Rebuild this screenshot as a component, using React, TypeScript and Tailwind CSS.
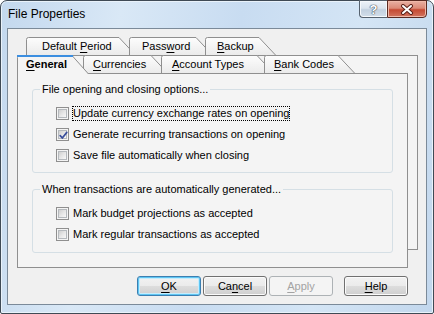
import React from "react";

const font = "font-['Liberation_Sans',Arial,sans-serif]";

function Mnemonic({ text, at }: { text: string; at: number }) {
  return (
    <>
      {text.slice(0, at)}
      <span className="underline decoration-1 underline-offset-[2px]">{text[at]}</span>
      {text.slice(at + 1)}
    </>
  );
}

interface TabProps {
  text: string;
  at: number;
  w: number;
  selected?: boolean;
  className: string;
  textClass: string;
}

function Tab({ text, at, w, selected = false, className, textClass }: TabProps) {
  const h = selected ? 19 : 18;
  const id = `tabfill-${text.replace(/\s/g, "")}`;
  return (
    <div className={`relative shrink-0 ${className}`}>
      <svg className="absolute left-0 top-0" width={w} height={h}>
        <defs>
          <linearGradient id={id} x1="0" y1="0" x2="0" y2="1">
            <stop offset="0" stopColor="#fdfdfd" />
            <stop offset="1" stopColor="#ebebeb" />
          </linearGradient>
        </defs>
        <path
          d={`M0.5 ${h} V2.5 Q0.5 0.5 2.5 0.5 H${w - 17} L${w - 0.5} ${h}`}
          fill={selected ? "#f4f4f4" : `url(#${id})`}
          stroke="#8f8f8f"
        />
        {selected && <rect x="0" y="0" width={w - 16} height="2" fill="#3b8ee0" />}
      </svg>
      <span
        className={`relative block text-[11px] leading-[18px] text-black whitespace-nowrap ${textClass}`}
      >
        <Mnemonic text={text} at={at} />
      </span>
    </div>
  );
}

function Checkbox({ checked = false }: { checked?: boolean }) {
  return (
    <span className="relative flex shrink-0 w-[13px] h-[13px] border border-[#8f8f8f] bg-[#f4f4f4] p-[1px]">
      <span className="flex-1 border border-[#b5b9bd] bg-[linear-gradient(135deg,#cfcfcf_0%,#e6e6e6_50%,#f8f8f8_100%)]" />
      {checked && (
        <svg className="absolute left-[1px] top-[1px]" width="11" height="11" viewBox="0 0 11 11">
          <path
            d="M2.2 5.6 L4.3 8 L8.8 2.4"
            fill="none"
            stroke="#3a4f9c"
            strokeWidth="1.7"
            strokeLinecap="round"
            strokeLinejoin="round"
          />
        </svg>
      )}
    </span>
  );
}

function CheckRow({
  label,
  checked,
  focused,
}: {
  label: string;
  checked?: boolean;
  focused?: boolean;
}) {
  return (
    <div className="flex items-center h-[21px] pl-[23px]">
      <Checkbox checked={checked} />
      <span
        className={`ml-[3px] border leading-[13px] whitespace-nowrap ${
          focused ? "border-dotted border-black" : "border-transparent"
        }`}
      >
        {label}
      </span>
    </div>
  );
}

function Group({
  title,
  className,
  children,
}: {
  title: string;
  className: string;
  children: React.ReactNode;
}) {
  return (
    <div className={`relative border border-[#d5dfe5] rounded-[3px] ${className}`}>
      <span className="absolute left-[7px] top-[-7px] px-[2px] bg-[#f4f4f4] leading-[13px] whitespace-nowrap">
        {title}
      </span>
      {children}
    </div>
  );
}

function Button({
  text,
  at,
  kind = "normal",
  className = "",
}: {
  text: string;
  at: number;
  kind?: "normal" | "default" | "disabled";
  className?: string;
}) {
  const look =
    kind === "disabled"
      ? "border-[#adb2b5] bg-[#f4f4f4] text-[#a3a3a3]"
      : kind === "default"
        ? "border-[#3c7fb1] bg-[linear-gradient(180deg,#f2f2f2_0%,#ebebeb_50%,#dddddd_51%,#cfcfcf_100%)] shadow-[inset_0_0_0_1px_#5fc6f3,inset_0_0_0_2px_#c6ecfc] text-black"
        : "border-[#707070] bg-[linear-gradient(180deg,#f2f2f2_0%,#ebebeb_50%,#dddddd_51%,#cfcfcf_100%)] shadow-[inset_0_0_0_1px_#fbfbfb] text-black";
  return (
    <div
      className={`w-[64px] h-[20px] rounded-[3px] border text-[11px] leading-[18px] text-center ${look} ${className}`}
    >
      <Mnemonic text={text} at={at} />
    </div>
  );
}

export default function App() {
  return (
    <div className={`w-[434px] h-[314px] bg-white ${font}`}>
      <div className="flex flex-col w-[434px] h-[314px] border border-[#3f4a55] rounded-t-[7px] rounded-b-[2px] bg-[linear-gradient(100deg,#c3d8ee_0%,#d9e8f6_25%,#c8dcf1_50%,#d4e5f5_75%,#c2d7ed_100%)] shadow-[inset_0_0_0_1px_#e9f2fa]">
        {/* title bar */}
        <div className="flex h-[27px] shrink-0">
          <span className="pl-[7px] text-[12px] leading-[27px] text-black">File Properties</span>
          <div className="ml-auto mr-[6px] flex h-[18px] -mt-px">
            <div className="flex w-[28px] items-center justify-center rounded-bl-[4px] border border-r-0 border-[#56626f] bg-[linear-gradient(180deg,#eef3f9_0%,#dbe4ee_45%,#c2d0df_55%,#d3dfea_100%)] shadow-[inset_0_0_0_1px_#f5f8fb]">
              <span className="text-[13px] font-bold leading-none text-white [text-shadow:0_0_1px_#3d4a58,0_0_1px_#3d4a58,0_0_1px_#3d4a58]">
                ?
              </span>
            </div>
            <div className="flex w-[40px] items-center justify-center rounded-br-[4px] border border-[#5a2a22] bg-[linear-gradient(180deg,#e8b0a3_0%,#dc8a77_45%,#c54a33_55%,#d27560_100%)] shadow-[inset_0_0_0_1px_#efb8a8]">
              <svg width="14" height="11" viewBox="0 0 14 11">
                <path d="M3 2 L11 9 M11 2 L3 9" stroke="#5a2018" strokeWidth="4" strokeLinecap="round" />
                <path d="M3 2 L11 9 M11 2 L3 9" stroke="#ffffff" strokeWidth="2" strokeLinecap="round" />
              </svg>
            </div>
          </div>
        </div>

        {/* client area */}
        <div className="flex flex-col flex-1 mx-[6px] mb-[8px] border border-[#7b8a99] bg-[#f0f0f0] text-[11px] text-black">
          <div className="relative flex flex-col ml-[9px] mt-[8px] w-[391px]">
            {/* back sheet of the multi-row tabs */}
            <div className="absolute left-[10px] top-[18px] w-[391px] h-[195px] border border-[#8f8f8f] bg-[#f4f4f4]" />

            <div className="relative flex h-[18px] ml-[9px]">
              <Tab text="Default Period" at={8} w={110} className="w-[110px]" textClass="pl-[16px]" />
              <Tab text="Password" at={4} w={84} className="w-[84px] -ml-[7px]" textClass="pl-[13px]" />
              <Tab text="Backup" at={0} w={71} className="w-[71px] -ml-[8px]" textClass="pl-[12px]" />
            </div>

            <div className="relative z-10 flex h-[18px]">
              <Tab text="General" at={0} w={72} selected className="w-[72px] z-10" textClass="pl-[9px] font-bold" />
              <Tab text="Currencies" at={0} w={85} className="w-[85px] -ml-[6px]" textClass="pl-[10px]" />
              <Tab text="Account Types" at={0} w={113} className="w-[113px] -ml-[7px]" textClass="pl-[11px]" />
              <Tab text="Bank Codes" at={0} w={91} className="w-[91px] -ml-[10px]" textClass="pl-[10px]" />
            </div>

            <div className="relative flex flex-col w-[391px] h-[195px] border border-[#8f8f8f] bg-[#f4f4f4] pt-[15px] px-[14px]">
              <Group title="File opening and closing options..." className="pt-[13px] pb-[6px]">
                <CheckRow label="Update currency exchange rates on opening" focused />
                <CheckRow label="Generate recurring transactions on opening" checked />
                <CheckRow label="Save file automatically when closing" />
              </Group>
              <Group title="When transactions are automatically generated..." className="mt-[16px] pt-[13px] pb-[7px]">
                <CheckRow label="Mark budget projections as accepted" />
                <CheckRow label="Mark regular transactions as accepted" />
              </Group>
            </div>
          </div>

          <div className="flex ml-[9px] w-[391px] mt-[8px] justify-end">
            <Button text="OK" at={0} kind="default" />
            <Button text="Cancel" at={2} className="ml-[2px]" />
            <Button text="Apply" at={0} kind="disabled" className="ml-[2px]" />
            <Button text="Help" at={0} className="ml-[11px]" />
          </div>
        </div>
      </div>
    </div>
  );
}
